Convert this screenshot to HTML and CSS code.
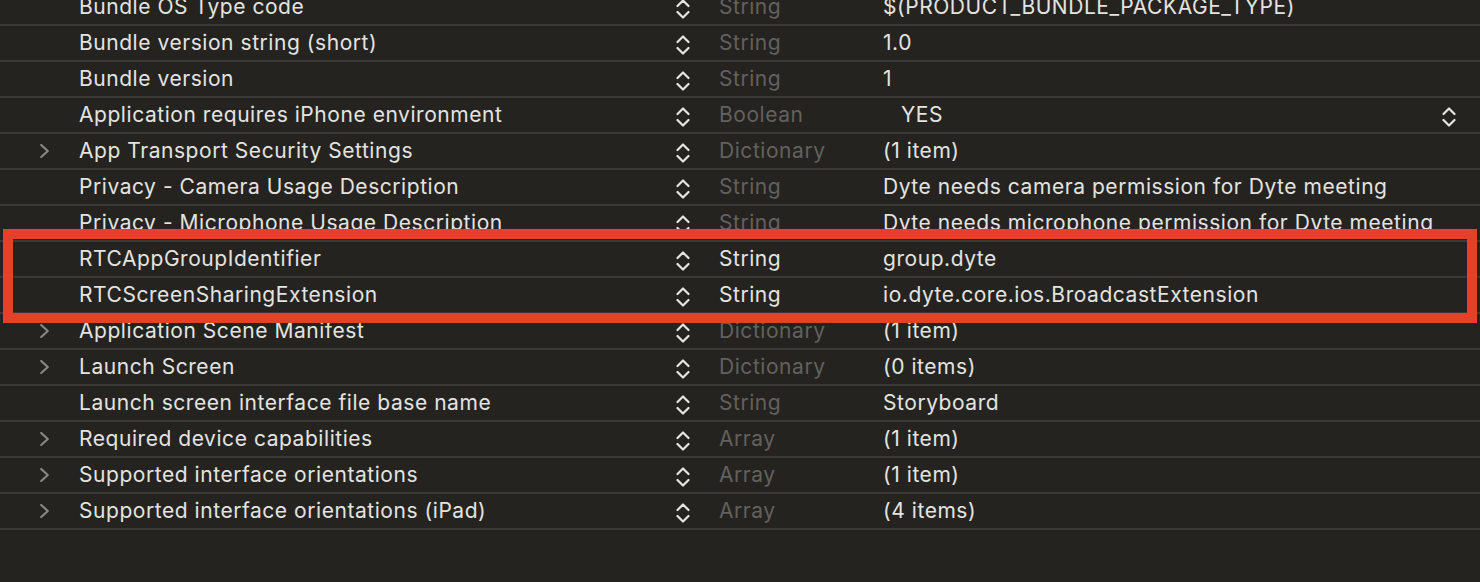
FILE: index.html
```html
<!DOCTYPE html>
<html>
<head>
<meta charset="utf-8">
<link rel="stylesheet" href="styles.css">
</head>
<body>
<div class="plist">
  <div class="row"><span class="disc"></span><span class="key">Bundle OS Type code</span><span class="step"><svg viewBox="0 0 14 20"><polyline points="1.5,7 7,1.5 12.5,7"/><polyline points="1.5,13 7,18.5 12.5,13"/></svg></span><span class="type">String</span><span class="val">$(PRODUCT_BUNDLE_PACKAGE_TYPE)</span></div>
  <div class="row"><span class="disc"></span><span class="key">Bundle version string (short)</span><span class="step"><svg viewBox="0 0 14 20"><polyline points="1.5,7 7,1.5 12.5,7"/><polyline points="1.5,13 7,18.5 12.5,13"/></svg></span><span class="type">String</span><span class="val">1.0</span></div>
  <div class="row"><span class="disc"></span><span class="key">Bundle version</span><span class="step"><svg viewBox="0 0 14 20"><polyline points="1.5,7 7,1.5 12.5,7"/><polyline points="1.5,13 7,18.5 12.5,13"/></svg></span><span class="type">String</span><span class="val">1</span></div>
  <div class="row"><span class="disc"></span><span class="key">Application requires iPhone environment</span><span class="step"><svg viewBox="0 0 14 20"><polyline points="1.5,7 7,1.5 12.5,7"/><polyline points="1.5,13 7,18.5 12.5,13"/></svg></span><span class="type">Boolean</span><span class="val val-popup"><span class="yes">YES</span><span class="step step-end"><svg viewBox="0 0 14 20"><polyline points="1.5,7 7,1.5 12.5,7"/><polyline points="1.5,13 7,18.5 12.5,13"/></svg></span></span></div>
  <div class="row"><span class="disc"><svg viewBox="0 0 10 14"><polyline points="2,1.5 8,7 2,12.5"/></svg></span><span class="key">App Transport Security Settings</span><span class="step"><svg viewBox="0 0 14 20"><polyline points="1.5,7 7,1.5 12.5,7"/><polyline points="1.5,13 7,18.5 12.5,13"/></svg></span><span class="type">Dictionary</span><span class="val">(1 item)</span></div>
  <div class="row"><span class="disc"></span><span class="key">Privacy - Camera Usage Description</span><span class="step"><svg viewBox="0 0 14 20"><polyline points="1.5,7 7,1.5 12.5,7"/><polyline points="1.5,13 7,18.5 12.5,13"/></svg></span><span class="type">String</span><span class="val">Dyte needs camera permission for Dyte meeting</span></div>
  <div class="row"><span class="disc"></span><span class="key">Privacy - Microphone Usage Description</span><span class="step"><svg viewBox="0 0 14 20"><polyline points="1.5,7 7,1.5 12.5,7"/><polyline points="1.5,13 7,18.5 12.5,13"/></svg></span><span class="type">String</span><span class="val">Dyte needs microphone permission for Dyte meeting</span></div>
  <div class="row"><span class="disc"></span><span class="key">RTCAppGroupIdentifier</span><span class="step"><svg viewBox="0 0 14 20"><polyline points="1.5,7 7,1.5 12.5,7"/><polyline points="1.5,13 7,18.5 12.5,13"/></svg></span><span class="type type-hi">String</span><span class="val">group.dyte</span></div>
  <div class="row"><span class="disc"></span><span class="key">RTCScreenSharingExtension</span><span class="step"><svg viewBox="0 0 14 20"><polyline points="1.5,7 7,1.5 12.5,7"/><polyline points="1.5,13 7,18.5 12.5,13"/></svg></span><span class="type type-hi">String</span><span class="val">io.dyte.core.ios.BroadcastExtension</span></div>
  <div class="row"><span class="disc"><svg viewBox="0 0 10 14"><polyline points="2,1.5 8,7 2,12.5"/></svg></span><span class="key">Application Scene Manifest</span><span class="step"><svg viewBox="0 0 14 20"><polyline points="1.5,7 7,1.5 12.5,7"/><polyline points="1.5,13 7,18.5 12.5,13"/></svg></span><span class="type">Dictionary</span><span class="val">(1 item)</span></div>
  <div class="row"><span class="disc"><svg viewBox="0 0 10 14"><polyline points="2,1.5 8,7 2,12.5"/></svg></span><span class="key">Launch Screen</span><span class="step"><svg viewBox="0 0 14 20"><polyline points="1.5,7 7,1.5 12.5,7"/><polyline points="1.5,13 7,18.5 12.5,13"/></svg></span><span class="type">Dictionary</span><span class="val">(0 items)</span></div>
  <div class="row"><span class="disc"></span><span class="key">Launch screen interface file base name</span><span class="step"><svg viewBox="0 0 14 20"><polyline points="1.5,7 7,1.5 12.5,7"/><polyline points="1.5,13 7,18.5 12.5,13"/></svg></span><span class="type">String</span><span class="val">Storyboard</span></div>
  <div class="row"><span class="disc"><svg viewBox="0 0 10 14"><polyline points="2,1.5 8,7 2,12.5"/></svg></span><span class="key">Required device capabilities</span><span class="step"><svg viewBox="0 0 14 20"><polyline points="1.5,7 7,1.5 12.5,7"/><polyline points="1.5,13 7,18.5 12.5,13"/></svg></span><span class="type">Array</span><span class="val">(1 item)</span></div>
  <div class="row"><span class="disc"><svg viewBox="0 0 10 14"><polyline points="2,1.5 8,7 2,12.5"/></svg></span><span class="key">Supported interface orientations</span><span class="step"><svg viewBox="0 0 14 20"><polyline points="1.5,7 7,1.5 12.5,7"/><polyline points="1.5,13 7,18.5 12.5,13"/></svg></span><span class="type">Array</span><span class="val">(1 item)</span></div>
  <div class="row"><span class="disc"><svg viewBox="0 0 10 14"><polyline points="2,1.5 8,7 2,12.5"/></svg></span><span class="key">Supported interface orientations (iPad)</span><span class="step"><svg viewBox="0 0 14 20"><polyline points="1.5,7 7,1.5 12.5,7"/><polyline points="1.5,13 7,18.5 12.5,13"/></svg></span><span class="type">Array</span><span class="val">(4 items)</span></div>
  <div class="highlight"></div>
</div>
</body>
</html>
```

FILE: styles.css
```css
html, body {
  margin: 0;
  padding: 0;
  background: #242320;
  height: 100%;
  overflow: hidden;
}

.plist {
  position: relative;
  margin-top: -10px;
  font-family: Inter, "Noto Sans", sans-serif;
  font-size: 21px;
  letter-spacing: 0.55px;
  color: #e4e3e0;
}

.row {
  display: grid;
  grid-template-columns: 79px 597px 43px 164px 1fr;
  align-items: center;
  height: 34px;
  border-bottom: 2px solid #393835;
}

.key,
.val,
.type {
  white-space: nowrap;
  overflow: hidden;
  padding-bottom: 2px;
}

.disc {
  display: flex;
  align-items: center;
  padding-left: 39px;
}

.disc svg {
  width: 11px;
  height: 16px;
  fill: none;
  stroke: #8a8986;
  stroke-width: 1.9;
  stroke-linecap: round;
  stroke-linejoin: round;
}

.step {
  display: flex;
  align-items: center;
  padding-top: 3px;
}

.step svg {
  width: 14px;
  height: 20px;
  fill: none;
  stroke: #e6e5e2;
  stroke-width: 2.2;
  stroke-linecap: round;
  stroke-linejoin: round;
}

.type {
  color: #62615e;
}

.type-hi {
  color: #e4e3e0;
}

.val-popup {
  display: flex;
  align-items: center;
  padding-left: 18px;
  padding-right: 24px;
  padding-bottom: 0;
}

.yes {
  flex: 1;
  padding-bottom: 2px;
}

.highlight {
  position: absolute;
  left: 3px;
  top: 239px;
  width: 1474px;
  height: 94px;
  box-sizing: border-box;
  border: 10px solid #e5402a;
}
```
